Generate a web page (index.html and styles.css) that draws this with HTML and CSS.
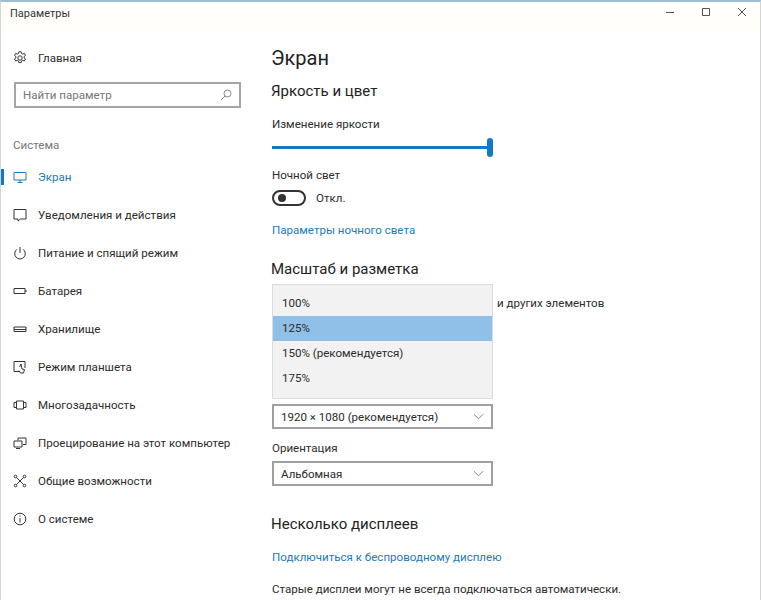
FILE: index.html
```html
<!DOCTYPE html>
<html lang="ru">
<head>
    <meta charset="UTF-8">
    <title>Параметры</title>
    <link rel="stylesheet" href="styles.css">
</head>
<body>
    <div class="window">
        <div class="titlebar">
            <span class="title">Параметры</span>
            <div class="controls">
                <svg class="ctl" viewBox="0 0 10 10"><path d="M1 5.500h8"/></svg>
                <svg class="ctl" viewBox="0 0 10 10"><path d="M1.500 1.500h7v7h-7z"/></svg>
                <svg class="ctl" viewBox="0 0 10 10"><path d="M1 1l8 8M9 1l-8 8"/></svg>
            </div>
        </div>
        <div class="content">
            <nav class="sidebar">
                <div class="nav-item home">
                    <svg class="icon" viewBox="0 0 14 14"><circle cx="7" cy="7" r="2.200"/><path d="M5.800.8h2.400l.3 1.700 1.200.6 1.600-.7 1.200 2-1.400 1.100v1.400l1.400 1.100-1.200 2-1.600-.7-1.200.6-.3 1.700H5.800l-.3-1.700-1.200-.6-1.600.7-1.200-2 1.400-1.100V5.500L1.500 4.400l1.200-2 1.600.7 1.200-.6z"/></svg>
                    <span>Главная</span>
                </div>
                <div class="search">
                    <span>Найти параметр</span>
                    <svg class="search-icon" viewBox="0 0 12 12"><circle cx="7.500" cy="4.500" r="3.500"/><path d="M5 7l-4 4"/></svg>
                </div>
                <div class="nav-heading">Система</div>
                <div class="nav-item active">
                    <svg class="icon" viewBox="0 0 14 14"><path d="M1 2.500h12v7.500H1zM7 10v2M4.500 12.500h5"/></svg>
                    <span>Экран</span>
                </div>
                <div class="nav-item">
                    <svg class="icon" viewBox="0 0 14 14"><path d="M1 1.500h12v9.500H7.500L5 13v-2H1z"/></svg>
                    <span>Уведомления и действия</span>
                </div>
                <div class="nav-item">
                    <svg class="icon" viewBox="0 0 14 14"><path d="M4 3.300a5.300 5.300 0 1 0 6 0M7 1v6"/></svg>
                    <span>Питание и спящий режим</span>
                </div>
                <div class="nav-item">
                    <svg class="icon" viewBox="0 0 14 14"><path d="M1 4.500h11v5H1zM13 6v2"/></svg>
                    <span>Батарея</span>
                </div>
                <div class="nav-item">
                    <svg class="icon" viewBox="0 0 14 14"><path d="M1 5h12v4.500H1zM1 7.500h12"/></svg>
                    <span>Хранилище</span>
                </div>
                <div class="nav-item">
                    <svg class="icon" viewBox="0 0 14 14"><path d="M6 11.500H1v-10h11V8M6.500 7l1.500-3 1 5 2.500.5-1 3.500H7.500L6 10.500"/></svg>
                    <span>Режим планшета</span>
                </div>
                <div class="nav-item">
                    <svg class="icon" viewBox="0 0 14 14"><path d="M3.500 3h7v8h-7zM3.500 4.500H1v5h2.500M10.500 4.500H13v5h-2.500"/></svg>
                    <span>Многозадачность</span>
                </div>
                <div class="nav-item">
                    <svg class="icon" viewBox="0 0 14 14"><path d="M5 4.500V2h8v6.500h-3M1 5h8v6H1zM3 12.500h4"/></svg>
                    <span>Проецирование на этот компьютер</span>
                </div>
                <div class="nav-item">
                    <svg class="icon" viewBox="0 0 14 14"><path d="M3.500 3.500l7 7M10.500 3.500l-7 7"/><circle cx="2.500" cy="2.500" r="1.300"/><circle cx="11.500" cy="2.500" r="1.300"/><circle cx="2.500" cy="11.500" r="1.300"/><circle cx="11.500" cy="11.500" r="1.300"/></svg>
                    <span>Общие возможности</span>
                </div>
                <div class="nav-item">
                    <svg class="icon" viewBox="0 0 14 14"><circle cx="7" cy="7" r="5.800"/><path d="M7 6v4.500M7 3.500v1.200"/></svg>
                    <span>О системе</span>
                </div>
            </nav>
            <main class="main">
                <h1>Экран</h1>
                <h2 class="first">Яркость и цвет</h2>
                <div class="label brightness">Изменение яркости</div>
                <div class="slider"><div class="slider-thumb"></div></div>
                <div class="label night">Ночной свет</div>
                <div class="toggle-row">
                    <div class="toggle"><div class="toggle-dot"></div></div>
                    <span>Откл.</span>
                </div>
                <a class="link night-link">Параметры ночного света</a>
                <section class="scale">
                    <h2>Масштаб и разметка</h2>
                    <div class="label scale-text">и других элементов</div>
                    <div class="select res-select">
                        <span>1920 × 1080 (рекомендуется)</span>
                        <svg class="chevron" viewBox="0 0 12 7"><path d="M1 1l5 5 5-5"/></svg>
                    </div>
                    <div class="label orient-label">Ориентация</div>
                    <div class="select">
                        <span>Альбомная</span>
                        <svg class="chevron" viewBox="0 0 12 7"><path d="M1 1l5 5 5-5"/></svg>
                    </div>
                    <ul class="dropdown">
                        <li>100%</li>
                        <li class="selected">125%</li>
                        <li>150% (рекомендуется)</li>
                        <li>175%</li>
                    </ul>
                </section>
                <h2 class="displays">Несколько дисплеев</h2>
                <a class="link wireless">Подключиться к беспроводному дисплею</a>
                <div class="label old">Старые дисплеи могут не всегда подключаться автоматически.</div>
            </main>
        </div>
    </div>
</body>
</html>
```

FILE: styles.css
```css
* {
    box-sizing: border-box;
}
body {
    margin: 0;
    font-family: Roboto, "Noto Sans", sans-serif;
    font-size: 11.55px;
    color: #2b2b2b;
    background: #fff;
}
.window {
    width: 761px;
    height: 600px;
    overflow: hidden;
    background: #fff;
    border-top: 2px solid #9dbdd0;
    border-left: 1px solid #d4d4d4;
    border-right: 1px solid #d4d4d4;
}
.titlebar {
    height: 29px;
    display: flex;
    justify-content: space-between;
    align-items: center;
    padding-left: 9px;
    background: #fffefb;
}
.title {
    font-size: 11px;
    color: #333;
    margin-top: -6px;
}
.controls {
    display: flex;
    gap: 26px;
    padding-right: 13px;
    margin-top: -9px;
}
.ctl {
    width: 10px;
    height: 10px;
    fill: none;
    stroke: #555;
    stroke-width: 1;
}
.content {
    display: flex;
}
.sidebar {
    width: 271px;
    flex-shrink: 0;
    padding-top: 8px;
}
.nav-item {
    height: 38px;
    display: flex;
    align-items: center;
    gap: 11px;
    padding-left: 12px;
    position: relative;
}
.icon {
    width: 14px;
    height: 14px;
    fill: none;
    stroke: #333;
    stroke-width: 1;
    flex-shrink: 0;
}
.home {
    margin-bottom: 5px;
}
.search {
    margin-left: 13px;
    width: 227px;
    height: 26px;
    border: 2px solid #a5a5a5;
    display: flex;
    align-items: center;
    justify-content: space-between;
    padding: 0 7px;
    color: #767676;
}
.search-icon {
    width: 12px;
    height: 12px;
    fill: none;
    stroke: #888;
    stroke-width: 1;
}
.nav-heading {
    margin-top: 26px;
    margin-left: 12px;
    height: 24px;
    line-height: 22px;
    color: #767676;
}
.active {
    color: #1d7ab8;
}
.active .icon {
    stroke: #1d7ab8;
}
.active::before {
    content: "";
    position: absolute;
    left: 0;
    top: 11px;
    width: 3px;
    height: 16px;
    background: #0f78c8;
}
.main {
    flex: 1;
    min-width: 0;
}
h1 {
    margin: 14px 0 0 -1px;
    font-size: 20px;
    font-weight: 400;
    line-height: 26px;
    color: #222;
}
h2 {
    margin: 0 0 0 -1px;
    font-size: 15px;
    font-weight: 400;
    line-height: 20px;
    color: #222;
}
.first {
    margin-top: 10px;
}
.label {
    line-height: 16px;
}
.brightness {
    margin-top: 15px;
}
.slider {
    width: 221px;
    height: 3px;
    margin-top: 14px;
    background: #0f78c8;
    position: relative;
}
.slider-thumb {
    position: absolute;
    right: 0;
    top: -8px;
    width: 6px;
    height: 19px;
    border-radius: 3px;
    background: #0f78c8;
}
.night {
    margin-top: 18px;
}
.toggle-row {
    display: flex;
    align-items: center;
    gap: 10px;
    margin-top: 7px;
}
.toggle {
    width: 34px;
    height: 16px;
    border: 2px solid #333;
    border-radius: 8px;
    display: flex;
    align-items: center;
    padding-left: 4px;
}
.toggle-dot {
    width: 8px;
    height: 8px;
    border-radius: 50%;
    background: #333;
}
.link {
    display: block;
    line-height: 16px;
    color: #1d7ab8;
}
.night-link {
    margin-top: 16px;
}
.scale {
    position: relative;
    margin-top: 21px;
}
.scale-text {
    margin-top: 16px;
    padding-left: 225px;
}
.select {
    width: 221px;
    height: 25px;
    border: 2px solid #a0a0a0;
    display: flex;
    align-items: center;
    justify-content: space-between;
    padding: 0 7px;
}
/* the open list covers the space above this select */
.res-select {
    margin-top: 93px;
}
.orient-label {
    margin-top: 11px;
    margin-bottom: 5px;
}
.chevron {
    width: 11px;
    height: 7px;
    fill: none;
    stroke: #777;
    stroke-width: 1;
}
.dropdown {
    position: absolute;
    left: 0;
    top: 25px;
    width: 221px;
    height: 115px;
    margin: 0;
    padding: 6px 0 0;
    list-style: none;
    background: #f2f2f2;
    border: 1px solid #dcdcdc;
}
.dropdown li {
    height: 25px;
    line-height: 25px;
    padding-left: 9px;
}
.selected {
    background: #90bfe7;
}
.displays {
    margin-top: 28px;
}
.wireless {
    margin-top: 15px;
}
.old {
    margin-top: 16px;
}
```
